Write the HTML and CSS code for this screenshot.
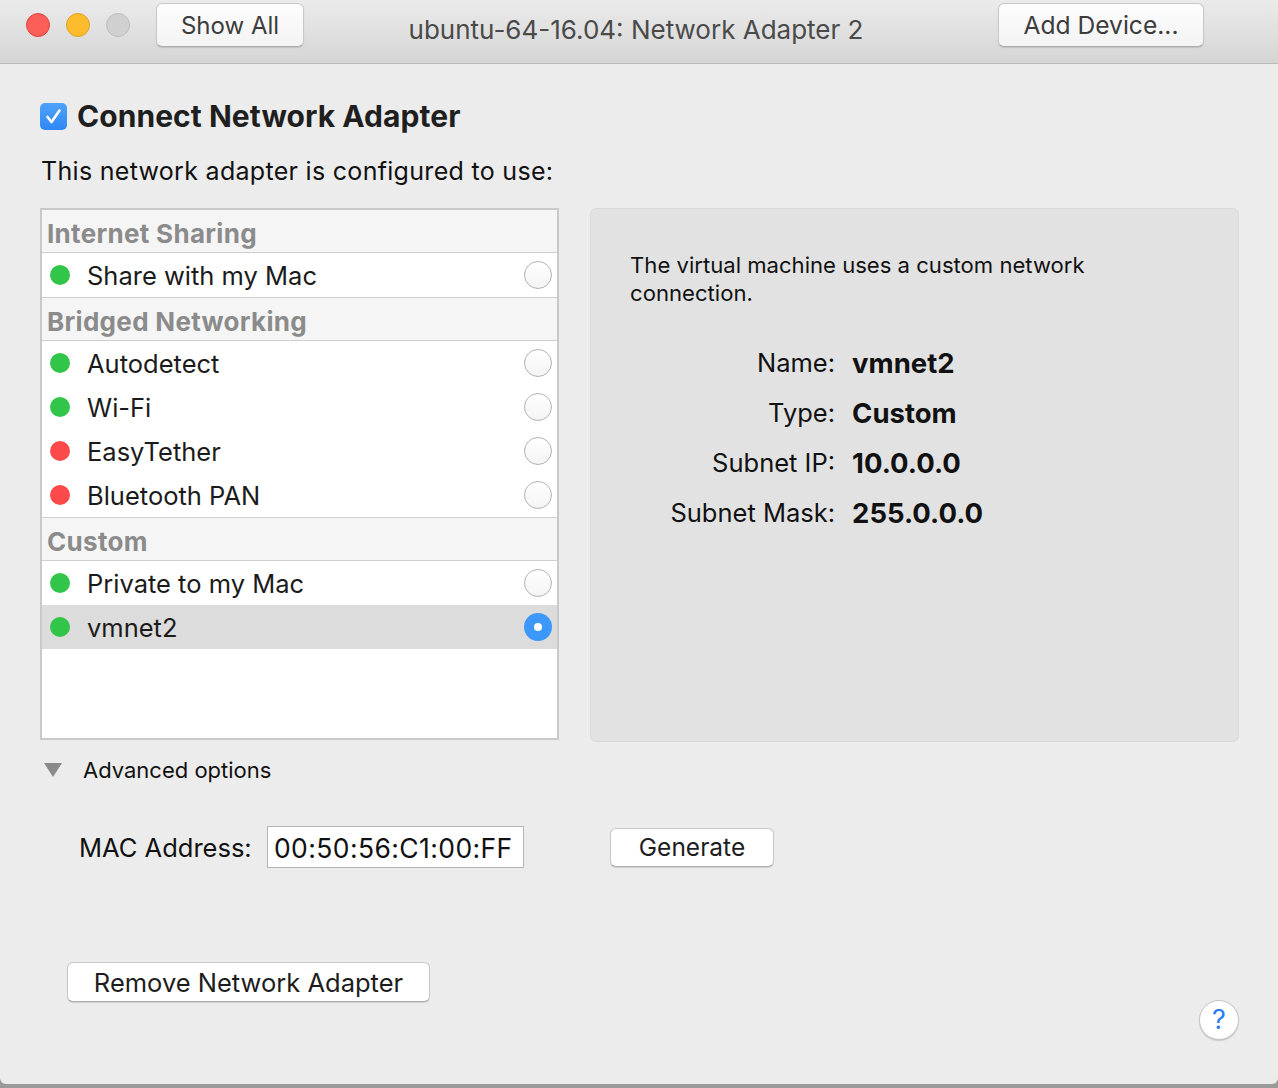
FILE: index.html
```html
<!DOCTYPE html>
<html>
<head>
<meta charset="utf-8">
<title>ubuntu-64-16.04: Network Adapter 2</title>
<link rel="stylesheet" href="styles.css">
</head>
<body>
<div class="window">
  <header class="titlebar">
    <div class="lights">
      <span class="light red"></span>
      <span class="light yellow"></span>
      <span class="light grey"></span>
    </div>
    <button class="btn tb-btn show-all">Show All</button>
    <div class="title">ubuntu-64-16.04: Network Adapter 2</div>
    <button class="btn tb-btn add-device">Add Device...</button>
  </header>

  <main class="content">
    <div class="connect">
      <span class="checkbox">
        <svg width="27" height="27" viewBox="0 0 27 27"><path d="M7.5 14 L11.5 19 L19.5 7.5" fill="none" stroke="#fff" stroke-width="2.6" stroke-linecap="round" stroke-linejoin="round"/></svg>
      </span>
      <span class="connect-label">Connect Network Adapter</span>
    </div>
    <p class="subtitle">This network adapter is configured to use:</p>

    <div class="panes">
      <div class="list">
        <div class="group first">Internet Sharing</div>
        <div class="row"><span class="dot green"></span><span class="label">Share with my Mac</span><span class="radio"></span></div>
        <div class="group">Bridged Networking</div>
        <div class="row"><span class="dot green"></span><span class="label">Autodetect</span><span class="radio"></span></div>
        <div class="row"><span class="dot green"></span><span class="label">Wi-Fi</span><span class="radio"></span></div>
        <div class="row"><span class="dot red-dot"></span><span class="label">EasyTether</span><span class="radio"></span></div>
        <div class="row"><span class="dot red-dot"></span><span class="label">Bluetooth PAN</span><span class="radio"></span></div>
        <div class="group">Custom</div>
        <div class="row"><span class="dot green"></span><span class="label">Private to my Mac</span><span class="radio"></span></div>
        <div class="row selected"><span class="dot green"></span><span class="label">vmnet2</span><span class="radio on"></span></div>
      </div>

      <div class="details">
        <p class="desc">The virtual machine uses a custom network connection.</p>
        <dl class="info">
          <dt>Name:</dt><dd>vmnet2</dd>
          <dt>Type:</dt><dd>Custom</dd>
          <dt>Subnet IP:</dt><dd>10.0.0.0</dd>
          <dt>Subnet Mask:</dt><dd>255.0.0.0</dd>
        </dl>
      </div>
    </div>

    <div class="advanced">
      <span class="disclosure"></span>
      <span class="adv-label">Advanced options</span>
    </div>

    <div class="mac-row">
      <span class="mac-label">MAC Address:</span>
      <span class="mac-input">00:50:56:C1:00:FF</span>
      <button class="btn generate">Generate</button>
    </div>

    <div class="bottom-row">
      <button class="btn remove">Remove Network Adapter</button>
      <button class="help">?</button>
    </div>
  </main>
</div>
</body>
</html>
```

FILE: styles.css
```css
html, body {
  margin: 0;
  padding: 0;
}
body {
  width: 1278px;
  height: 1088px;
  overflow: hidden;
  background: linear-gradient(#5e5e5e, #9a9a9a);
  font-family: "Inter", "Noto Sans", "Liberation Sans", sans-serif;
  color: #1d1d1d;
}
.window {
  width: 1278px;
  height: 1084px;
  background: #ececec;
  border-radius: 0 0 6px 6px;
  display: flex;
  flex-direction: column;
  overflow: hidden;
}

/* title bar */
.titlebar {
  height: 63px;
  flex: none;
  display: flex;
  align-items: flex-start;
  background: linear-gradient(#ebebeb, #d5d5d5);
  border-bottom: 1px solid #b9b9b9;
  box-sizing: content-box;
}
.lights {
  display: flex;
  gap: 16px;
  padding: 13px 0 0 26px;
}
.light {
  width: 24px;
  height: 24px;
  border-radius: 50%;
  box-sizing: border-box;
}
.light.red { background: #fc5f57; border: 1px solid #e0443e; }
.light.yellow { background: #fdbc2e; border: 1px solid #dea123; }
.light.grey { background: #d0d0d0; border: 1px solid #bdbdbd; }

.btn {
  font-family: inherit;
  background: #fff;
  border: 1px solid #c8c8c8;
  border-bottom-color: #acacac;
  border-radius: 6px;
  box-shadow: 0 1px 1px rgba(0,0,0,0.12);
  color: #1d1d1d;
  padding: 0;
  cursor: default;
}
.tb-btn {
  height: 44px;
  margin-top: 3px;
  font-size: 24px;
  color: #3c3c3c;
  background: linear-gradient(#fdfdfd, #f3f3f3);
}
.show-all {
  width: 148px;
  margin-left: 26px;
}
.title {
  flex: 1;
  text-align: center;
  font-size: 26px;
  color: #4a4a4a;
  padding: 14px 30px 0 0;
}
.add-device {
  width: 206px;
  margin-right: 74px;
  font-size: 24.6px;
}

/* content */
.content {
  flex: 1;
  padding: 38px 39px 0 40px;
  display: flex;
  flex-direction: column;
}
.connect {
  display: flex;
  align-items: center;
  height: 28px;
}
.checkbox {
  width: 27px;
  height: 27px;
  border-radius: 5px;
  background: linear-gradient(#4fa2fb, #2f87f5);
  display: flex;
  flex: none;
}
.connect-label {
  font-size: 30px;
  font-weight: 700;
  margin-left: 10px;
  color: #1f1f1f;
  letter-spacing: 0.05px;
}
.subtitle {
  margin: 26px 0 0 1px;
  font-size: 25px;
  letter-spacing: 0.3px;
  line-height: 30px;
  color: #111;
}

.panes {
  margin-top: 22px;
  display: flex;
  gap: 31px;
  align-items: flex-start;
}
.list {
  width: 520px;
  height: 532px;
  box-sizing: border-box;
  border: 2px solid #c9c9c9;
  background: #fff;
}
.group {
  height: 42px;
  box-sizing: content-box;
  background: #f5f5f5;
  border-top: 1px solid #cfcfcf;
  border-bottom: 1px solid #cfcfcf;
  color: #8b8b8b;
  font-weight: 700;
  font-size: 26px;
  letter-spacing: 0.3px;
  line-height: 48px;
  padding-left: 5px;
}
.group.first {
  border-top: none;
}
.row {
  height: 44px;
  display: flex;
  align-items: center;
}
.row.selected {
  background: #dcdcdc;
}
.dot {
  width: 20px;
  height: 20px;
  border-radius: 50%;
  margin-left: 8px;
  flex: none;
}
.dot.green { background: #31c549; }
.dot.red-dot { background: #fc4a4a; }
.label {
  flex: 1;
  margin-left: 17px;
  font-size: 25.5px;
  color: #1b1b1b;
}
.radio {
  width: 28px;
  height: 28px;
  box-sizing: border-box;
  border-radius: 50%;
  border: 1px solid #b3b3b3;
  background: linear-gradient(#ffffff, #f4f4f4);
  margin-right: 5px;
  flex: none;
  display: flex;
  align-items: center;
  justify-content: center;
}
.radio.on {
  border: none;
  background: #3d98fb;
}
.radio.on::after {
  content: "";
  width: 8px;
  height: 8px;
  border-radius: 50%;
  background: #fff;
}

.details {
  width: 650px;
  height: 534px;
  box-sizing: border-box;
  background: #e2e2e2;
  border: 1px solid #dadada;
  border-radius: 6px;
  padding: 42px 0 0 39px;
}
.desc {
  margin: 0;
  width: 480px;
  font-size: 22.1px;
  line-height: 28px;
  color: #111;
}
.info {
  margin: 31px 0 0 0;
  display: grid;
  grid-template-columns: 205px auto;
  column-gap: 17px;
  row-gap: 0;
  align-items: center;
}
.info dt {
  text-align: right;
  font-size: 25.5px;
  line-height: 50px;
  color: #111;
}
.info dd {
  margin: 0;
  font-size: 27.5px;
  font-weight: 700;
  line-height: 50px;
  color: #111;
}

.advanced {
  display: flex;
  align-items: center;
  margin-top: 15px;
  height: 26px;
}
.disclosure {
  width: 0;
  height: 0;
  border-left: 9px solid transparent;
  border-right: 9px solid transparent;
  border-top: 14px solid #8a8a8a;
  margin-left: 4px;
}
.adv-label {
  margin-left: 21px;
  font-size: 22px;
  color: #111;
}

.mac-row {
  display: flex;
  align-items: center;
  margin-top: 43px;
  height: 42px;
}
.mac-label {
  margin-left: 39px;
  font-size: 25.5px;
  color: #111;
  width: 188px;
}
.mac-input {
  width: 257px;
  height: 42px;
  box-sizing: border-box;
  border: 1px solid #b5b5b5;
  background: #fff;
  font-size: 26.5px;
  letter-spacing: 0.4px;
  line-height: 42px;
  padding-left: 6px;
  color: #111;
}
.generate {
  margin-left: 86px;
  width: 164px;
  height: 39px;
  font-size: 24.5px;
}

.bottom-row {
  display: flex;
  justify-content: space-between;
  align-items: flex-start;
  margin-top: 94px;
  padding-left: 27px;
}
.remove {
  width: 363px;
  height: 40px;
  font-size: 25.5px;
}
.help {
  margin-top: 38px;
  width: 40px;
  height: 40px;
  border-radius: 50%;
  border: 1px solid #c4c4c4;
  background: #fff;
  box-shadow: 0 1px 1px rgba(0,0,0,0.15);
  color: #2b7df6;
  font-family: inherit;
  font-size: 27px;
  padding: 0;
  line-height: 38px;
}
```
